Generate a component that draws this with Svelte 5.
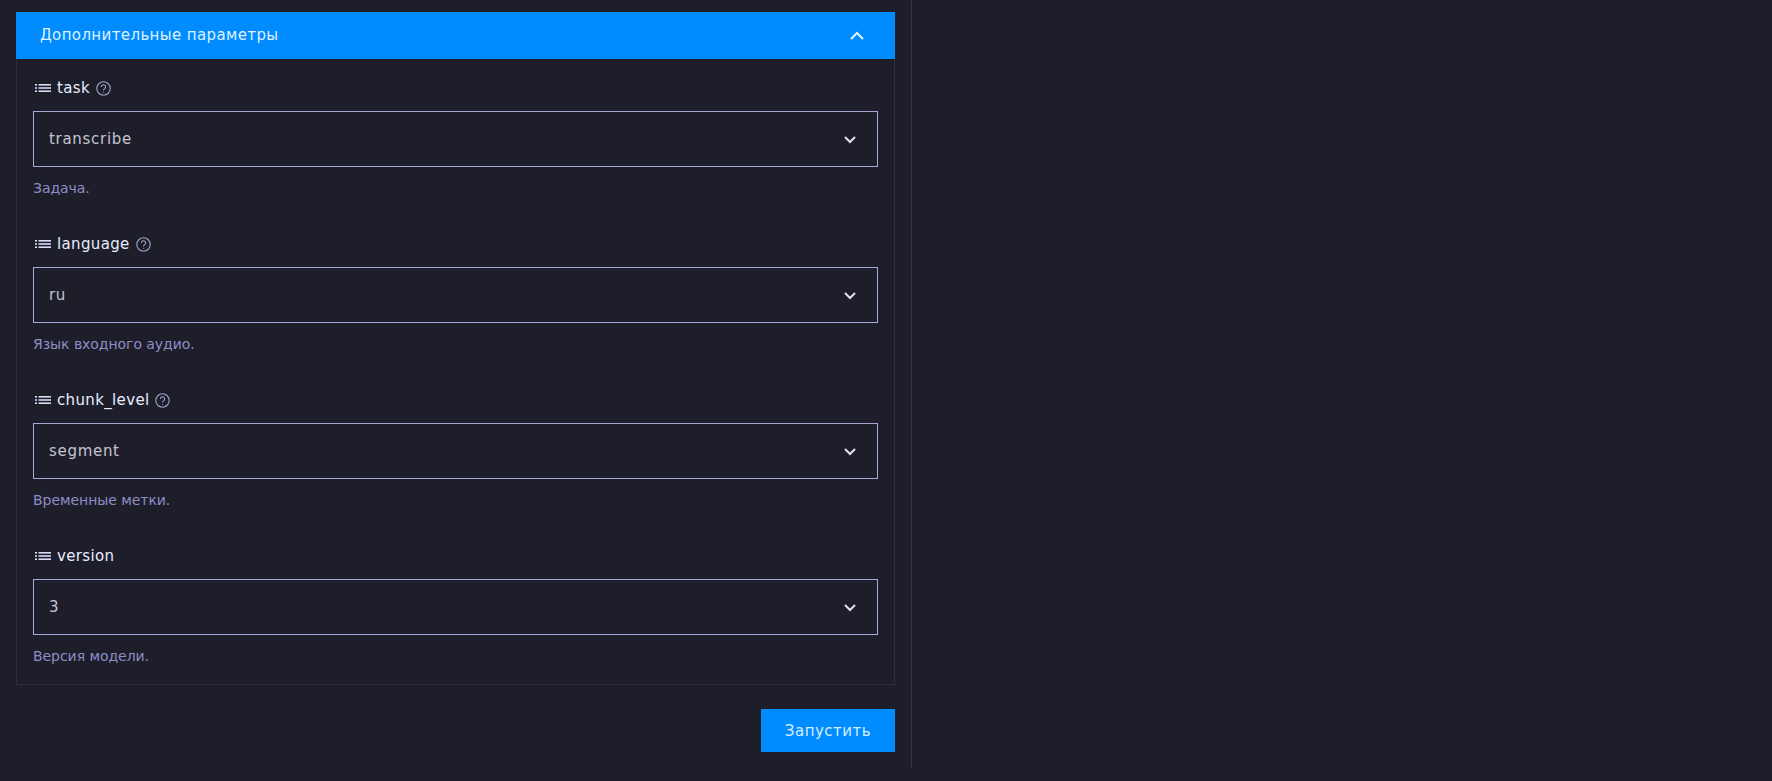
<script>
  const fields = [
    { name: 'task', value: 'transcribe', help: 'Задача.', tip: true },
    { name: 'language', value: 'ru', help: 'Язык входного аудио.', tip: true },
    { name: 'chunk_level', value: 'segment', help: 'Временные метки.', tip: true },
    { name: 'version', value: '3', help: 'Версия модели.', tip: false }
  ];
</script>

<div class="page">
  <main class="column">
    <section class="card">
      <header class="head">
        <span class="title">Дополнительные параметры</span>
        <svg class="head-chev" viewBox="0 0 14 9" width="14" height="9" fill="none" stroke="currentColor" stroke-width="2"><path d="M1 8l6-6 6 6" /></svg>
      </header>
      <div class="body">
        {#each fields as f}
          <div class="field">
            <div class="label">
              <svg class="list" viewBox="0 0 16 8" width="16" height="8" fill="currentColor">
                <rect x="0" y="0" width="2" height="1.6" /><rect x="3.5" y="0" width="12.5" height="1.6" />
                <rect x="0" y="3.2" width="2" height="1.6" /><rect x="3.5" y="3.2" width="12.5" height="1.6" />
                <rect x="0" y="6.4" width="2" height="1.6" /><rect x="3.5" y="6.4" width="12.5" height="1.6" />
              </svg>
              <span>{f.name}</span>
              {#if f.tip}
                <svg class="tip" viewBox="0 0 15 15" width="15" height="15" fill="none" stroke="currentColor" stroke-width="1.1">
                  <circle cx="7.5" cy="7.5" r="6.7" />
                  <path d="M5.4 5.9a2.1 2.1 0 1 1 3.3 1.7c-.8.5-1.2.9-1.2 1.8" />
                  <circle cx="7.5" cy="11.2" r=".5" fill="currentColor" stroke="none" />
                </svg>
              {/if}
            </div>
            <div class="select">
              <span>{f.value}</span>
              <svg class="chev" viewBox="0 0 12 8" width="12" height="8" fill="none" stroke="currentColor" stroke-width="2"><path d="M1 1l5 5 5-5" /></svg>
            </div>
            <p class="help">{f.help}</p>
          </div>
        {/each}
      </div>
    </section>
    <div class="actions">
      <button class="run">Запустить</button>
    </div>
  </main>
</div>

<style>
  :global(body) {
    margin: 0;
    background: #1e1e2b;
  }
  .page {
    height: 781px;
    overflow: hidden;
    font-family: "DejaVu Sans", sans-serif;
  }
  .column {
    box-sizing: border-box;
    width: 912px;
    padding: 12px 16px 16px 16px;
    border-right: 1px solid #34344a;
  }
  .card {
    border: 1px solid #2e2e40;
    border-top: 0;
  }
  .head {
    height: 47px;
    margin: 0 -1px;
    padding: 0 31px 0 24px;
    display: flex;
    align-items: center;
    justify-content: space-between;
    background: #008cff;
    color: #dff1ff;
    font-size: 15px;
  }
  .title {
    padding-bottom: 2px;
    letter-spacing: 0.38px;
  }
  .head-chev {
    color: #e6f4ff;
  }
  .body {
    padding: 17px 16px 18px;
    display: flex;
    flex-direction: column;
    gap: 34px;
  }
  .label {
    height: 24px;
    margin-bottom: 11px;
    display: flex;
    align-items: center;
    gap: 6px;
    color: #e8edff;
    font-size: 15px;
    letter-spacing: 0.35px;
    padding-left: 2px;
  }
  .list {
    color: #d8dcf5;
  }
  .tip {
    color: #a0a0c8;
  }
  .select {
    box-sizing: border-box;
    height: 56px;
    border: 1px solid #aaa6d8;
    padding: 0 21px 0 15px;
    display: flex;
    align-items: center;
    justify-content: space-between;
    color: #c4c4d2;
    font-size: 15px;
    letter-spacing: 0.7px;
  }
  .chev {
    color: #e2e2ee;
    margin-top: 2px;
  }
  .help {
    margin: 11px 0 0;
    height: 20px;
    line-height: 20px;
    color: #8d8dc4;
    font-size: 14px;
    letter-spacing: -0.05px;
  }
  .actions {
    margin-top: 24px;
    display: flex;
    justify-content: flex-end;
  }
  .run {
    width: 134px;
    height: 43px;
    border: 0;
    padding: 0;
    background: #008cff;
    color: #d6eeff;
    font-family: inherit;
    font-size: 15px;
    letter-spacing: 0.5px;
  }
</style>
